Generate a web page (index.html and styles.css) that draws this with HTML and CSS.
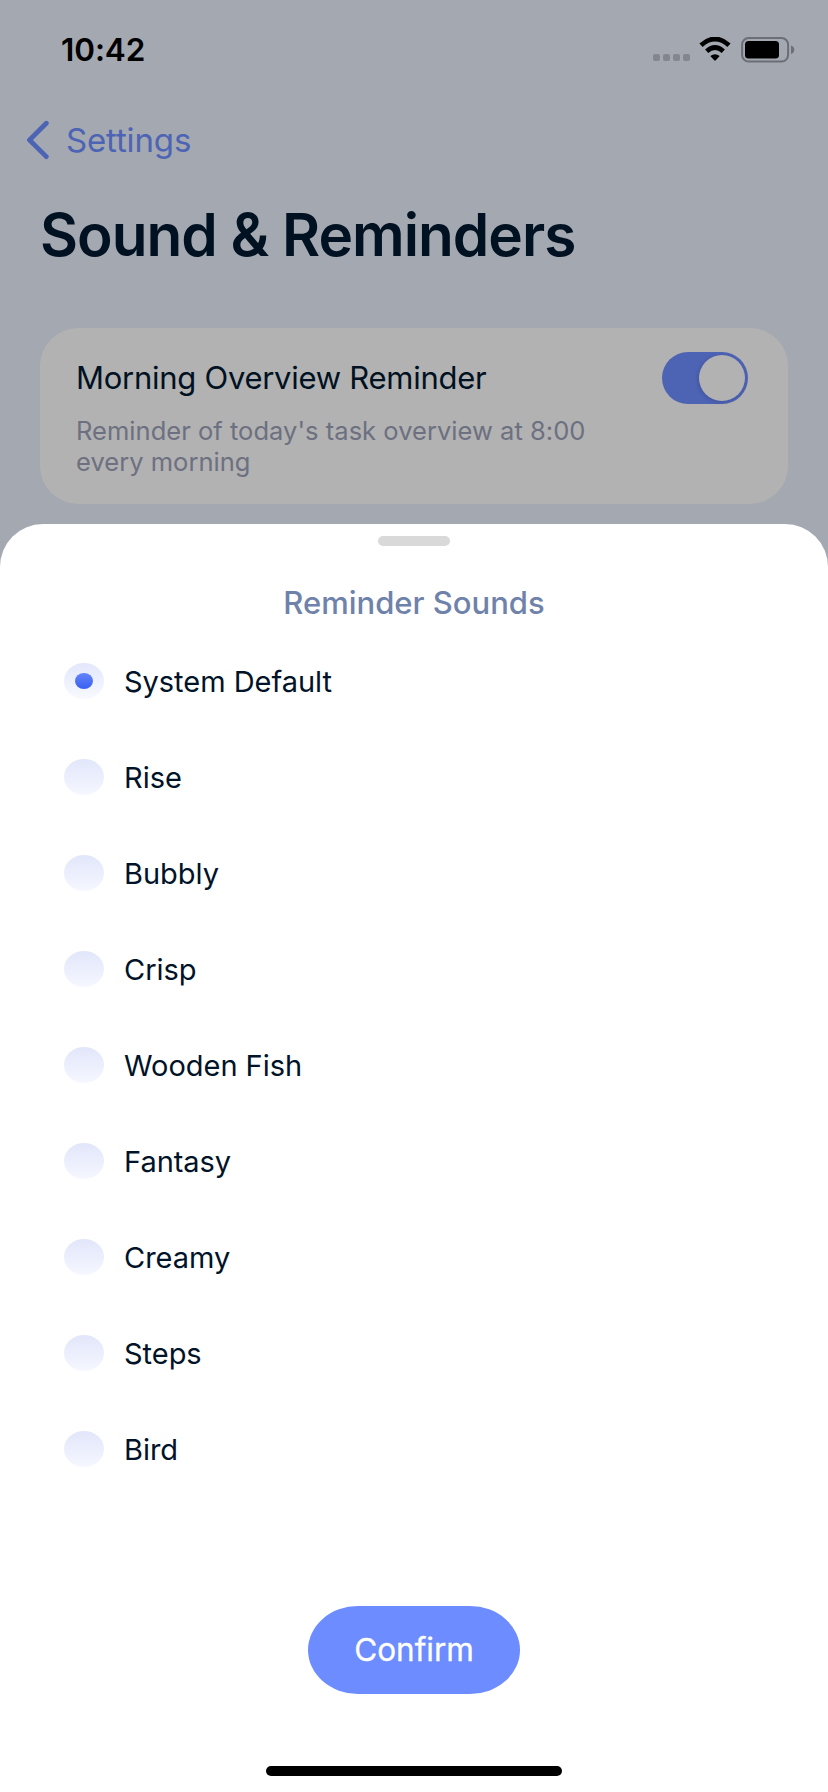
FILE: index.html
```html
<!DOCTYPE html>
<html lang="en">
<head>
<meta charset="utf-8">
<title>Sound &amp; Reminders</title>
<link rel="stylesheet" href="styles.css">
</head>
<body>
<div class="screen">
  <header class="status">
    <span class="time">10:42</span>
    <div class="indicators">
      <svg class="cell" width="37" height="7" viewBox="0 0 37 7"><rect width="7" height="7" rx="2"/><rect x="10" width="7" height="7" rx="2"/><rect x="20" width="7" height="7" rx="2"/><rect x="30" width="7" height="7" rx="2"/></svg>
      <svg class="wifi" width="32" height="24" viewBox="0 0 32 24"><path d="M2 8.2Q16-4.2 30 8.2M7.7 14.2Q16 7 24.3 14.2" fill="none" stroke="#000" stroke-width="4.8"/><path d="M11.3 19Q16 15.3 20.7 19L16.8 23.2Q16 24 15.2 23.2Z"/></svg>
      <svg class="battery" width="54" height="26" viewBox="0 0 54 26"><rect x="1.1" y="1.1" width="46" height="23.4" rx="6.5" fill="none" stroke="#6c6e76" stroke-width="2"/><rect x="4" y="4" width="34" height="17.4" rx="3.5"/><path d="M50 8.5Q53.3 10 53.3 12.8T50 17.1Z" fill="#6c6e76"/></svg>
    </div>
  </header>
  <nav class="back">
    <svg width="24" height="40" viewBox="0 0 24 40"><path d="M20.3 3.3L3.5 20L20.3 36.6" fill="none" stroke="#4d63b4" stroke-width="4.8" stroke-linecap="round" stroke-linejoin="round"/></svg>
    <span class="back-label">Settings</span>
  </nav>
  <h1 class="title">Sound &amp; Reminders</h1>
  <section class="card">
    <div class="card-text">
      <div class="card-title">Morning Overview Reminder</div>
      <p class="card-note">Reminder of today's task overview at 8:00<br>every morning</p>
    </div>
    <div class="toggle"><div class="knob"></div></div>
  </section>
  <main class="sheet">
    <div class="handle"></div>
    <h2 class="sheet-title">Reminder Sounds</h2>
    <ul class="options">
      <li class="option"><span class="radio selected"><span class="dot"></span></span><span class="name">System Default</span></li>
      <li class="option"><span class="radio"></span><span class="name">Rise</span></li>
      <li class="option"><span class="radio"></span><span class="name">Bubbly</span></li>
      <li class="option"><span class="radio"></span><span class="name">Crisp</span></li>
      <li class="option"><span class="radio"></span><span class="name">Wooden Fish</span></li>
      <li class="option"><span class="radio"></span><span class="name">Fantasy</span></li>
      <li class="option"><span class="radio"></span><span class="name">Creamy</span></li>
      <li class="option"><span class="radio"></span><span class="name">Steps</span></li>
      <li class="option"><span class="radio"></span><span class="name">Bird</span></li>
    </ul>
    <button class="confirm">Confirm</button>
    <div class="home"></div>
  </main>
</div>
</body>
</html>
```
FILE: styles.css
```css
* { box-sizing: border-box; margin: 0; padding: 0; }
body { font-family: Inter, "Liberation Sans", sans-serif; color: #001328; }
.screen { width: 828px; height: 1792px; background: #a4a8b1; display: flex; flex-direction: column; overflow: hidden; }
.status { height: 100px; padding: 30px 33px 0 61px; display: flex; justify-content: space-between; align-items: flex-start; }
.time { font-size: 31.5px; line-height: 40px; font-weight: 600; color: #000; letter-spacing: -0.1px; }
.indicators { display: flex; padding-top: 7px; }
.cell { margin: 17px 9px 0 0; fill: #83868e; }
.wifi { margin-right: 10px; }
.back { height: 80px; padding-left: 26px; display: flex; align-items: center; }
.back-label { font-size: 33px; line-height: 40px; color: #4d63b4; margin-left: 16px; letter-spacing: -0.15px; }
.title { font-size: 58.5px; line-height: 70px; font-weight: 600; padding-left: 40px; margin-top: 20px; letter-spacing: -1px; color: #001122; white-space: nowrap; }
.card { margin: 58px 40px 0; height: 176px; border-radius: 38px; background: #b2b2b2; padding: 24px 40px 0 36px; display: flex; justify-content: space-between; align-items: flex-start; }
.card-title { font-size: 31px; line-height: 52px; white-space: nowrap; letter-spacing: -0.27px; color: #001122; }
.card-note { font-size: 25.5px; line-height: 31px; margin-top: 11px; color: #6c7080; white-space: nowrap; letter-spacing: 0.03px; }
.toggle { width: 86px; height: 52px; border-radius: 26px; background: #4d63b4; padding: 3px; display: flex; justify-content: flex-end; }
.knob { width: 46px; height: 46px; border-radius: 50%; background: #b2b2b2; box-shadow: -1px 1px 4px rgba(0, 0, 30, 0.16); }
.sheet { margin-top: 20px; height: 1268px; background: #fff; border-radius: 43px 43px 0 0; display: flex; flex-direction: column; align-items: center; }
.handle { width: 72px; height: 10px; border-radius: 5px; background: #d9d9d9; margin-top: 12px; flex: none; }
.sheet-title { font-size: 31px; line-height: 40px; font-weight: 500; color: #6f82aa; margin-top: 37px; letter-spacing: 0; }
.options { list-style: none; align-self: stretch; padding-left: 64px; margin-top: 10px; }
.option { height: 96px; display: flex; align-items: center; }
.radio { width: 40px; height: 36px; border-radius: 50%; background: linear-gradient(#e1e6fa, #f5f8ff); display: flex; align-items: center; justify-content: center; }
.selected { background: linear-gradient(#e2e7fb, #f8faff); }
.dot { width: 18px; height: 16px; border-radius: 50%; background: linear-gradient(#6485fb, #3860f2); }
.name { font-size: 29px; line-height: 40px; margin-left: 20px; padding-top: 2px; letter-spacing: -0.03px; }
.confirm { width: 212px; height: 88px; border: 0; border-radius: 50px / 44px; background: #6c8cff; color: #fff; font: 400 31.5px/40px Inter, sans-serif; letter-spacing: 0; -webkit-text-stroke: 0.3px #fff; margin-top: 109px; }
.home { width: 296px; height: 10px; border-radius: 5px; background: #000; margin-top: 72px; }
```
